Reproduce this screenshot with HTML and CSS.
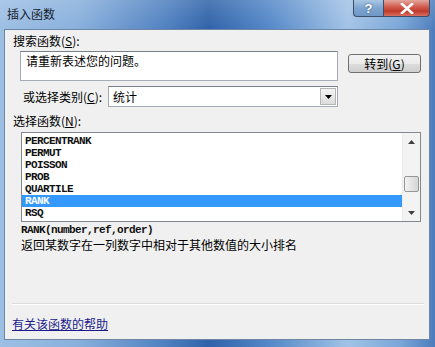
FILE: index.html
```html
<!DOCTYPE html>
<html lang="zh-CN">
<head>
<meta charset="utf-8">
<title>插入函数</title>
<link rel="stylesheet" href="styles.css">
</head>
<body>
<div class="window">
  <div class="titlebar">
    <span class="title">插入函数</span>
    <div class="tbtns">
      <div class="tb help">?</div>
      <div class="tb close">
        <svg width="14" height="11" viewBox="0 0 14 11"><path d="M2 1 L12 10 M12 1 L2 10" stroke="#fff" stroke-width="2.6" stroke-linecap="square"/></svg>
      </div>
    </div>
  </div>
  <div class="client">
    <div class="lbl">搜索函数(<u>S</u>):</div>
    <div class="row1">
      <div class="textbox">请重新表述您的问题。</div>
      <div class="btn">转到(<u>G</u>)</div>
    </div>
    <div class="row2">
      <div class="lbl2">或选择类别(<u>C</u>):</div>
      <div class="combo">
        <span class="combo-text">统计</span>
        <div class="dd"><svg width="7" height="4" viewBox="0 0 7 4"><path d="M0 0 H7 L3.5 4 Z" fill="#000"/></svg></div>
      </div>
    </div>
    <div class="lbl lbl3">选择函数(<u>N</u>):</div>
    <div class="listbox">
      <div class="items">
        <div class="item">PERCENTRANK</div>
        <div class="item">PERMUT</div>
        <div class="item">POISSON</div>
        <div class="item">PROB</div>
        <div class="item">QUARTILE</div>
        <div class="item sel">RANK</div>
        <div class="item">RSQ</div>
      </div>
      <div class="vscroll">
        <div class="arrow"><svg width="7" height="4" viewBox="0 0 7 4"><path d="M0 4 H7 L3.5 0 Z" fill="#404040"/></svg></div>
        <div class="track"><div class="thumb"></div></div>
        <div class="arrow"><svg width="7" height="4" viewBox="0 0 7 4"><path d="M0 0 H7 L3.5 4 Z" fill="#404040"/></svg></div>
      </div>
    </div>
    <div class="sig">RANK(number,ref,order)</div>
    <div class="desc">返回某数字在一列数字中相对于其他数值的大小排名</div>
    <div class="sep"></div>
    <a class="link" href="#">有关该函数的帮助</a>
  </div>
</div>
</body>
</html>
```
FILE: styles.css
```css
html, body {
  margin: 0;
  padding: 0;
}
body {
  width: 435px;
  height: 347px;
  overflow: hidden;
  font-family: "Noto Sans CJK SC", "Liberation Sans", sans-serif;
  font-size: 12px;
  color: #000;
}
.window {
  width: 435px;
  height: 347px;
  box-sizing: border-box;
  padding: 0 5px 7px 4px;
  display: flex;
  flex-direction: column;
  background:
    linear-gradient(180deg, rgba(255,255,255,0.15) 0%, rgba(255,255,255,0) 30px),
    linear-gradient(90deg, #9dbfe4 0%, #88b0dc 18%, #4f80c0 38%, #2f62a8 48%, #5488c8 62%, #a2c3e6 80%, #7aa6d8 92%, #4c7cbc 100%);
}
.titlebar {
  height: 29px;
  display: flex;
  align-items: flex-start;
  justify-content: space-between;
  flex: none;
}
.title {
  margin-top: 6px;
  margin-left: 3px;
  line-height: 16px;
  font-size: 12px;
  color: #18222e;
}
.tbtns {
  display: flex;
}
.tb {
  height: 17px;
  box-sizing: border-box;
  border: 1px solid #3b4f6a;
  border-top: none;
  display: flex;
  align-items: center;
  justify-content: center;
}
.help {
  width: 30px;
  border-radius: 0 0 0 4px;
  border-right: none;
  background: linear-gradient(180deg, #aac6e4 0%, #7ea5cf 50%, #6f98c6 100%);
  color: #fff;
  font-family: "Liberation Sans", sans-serif;
  font-weight: bold;
  font-size: 13px;
  line-height: 15px;
  text-shadow: 0 0 2px #2b4a70;
}
.close {
  width: 47px;
  border-radius: 0 0 4px 0;
  background: linear-gradient(180deg, #e3a79d 0%, #d0584a 45%, #c03a2c 70%, #d87060 100%);
}
.client {
  flex: 1;
  background: #f0f0f0;
  border: 1px solid #6d86a6;
  padding: 4px 0 0 7px;
  display: flex;
  flex-direction: column;
  align-items: flex-start;
}
u {
  text-decoration: underline;
  text-underline-offset: 1px;
}
.lbl {
  line-height: 14px;
  height: 14px;
  margin-left: 1px;
}
.row1 {
  display: flex;
  align-items: flex-start;
  margin-top: 3px;
  margin-left: 8px;
}
.textbox {
  width: 318px;
  height: 30px;
  box-sizing: border-box;
  background: #fff;
  border: 1px solid #a5acb5;
  border-top-color: #7a8088;
  padding: 1px 0 0 5px;
  line-height: 16px;
}
.btn {
  width: 73px;
  height: 19px;
  box-sizing: border-box;
  margin-top: 3px;
  margin-left: 10px;
  border: 1px solid #707070;
  border-radius: 3px;
  background: linear-gradient(180deg, #f2f2f2 0%, #ebebeb 50%, #dddddd 51%, #cfcfcf 100%);
  text-align: center;
  line-height: 17px;
}
.row2 {
  display: flex;
  align-items: center;
  margin-top: 5px;
}
.lbl2 {
  width: 96px;
  box-sizing: border-box;
  padding-left: 11px;
  line-height: 14px;
}
.combo {
  width: 230px;
  height: 21px;
  box-sizing: border-box;
  background: #fff;
  border: 1px solid #a5acb5;
  border-top-color: #7a8088;
  display: flex;
  align-items: center;
  justify-content: space-between;
  padding: 0 1px 0 4px;
}
.combo-text {
  line-height: 16px;
}
.dd {
  width: 16px;
  height: 17px;
  box-sizing: border-box;
  border: 1px solid #b5b5b5;
  background: linear-gradient(180deg, #f4f4f4 0%, #dcdcdc 100%);
  display: flex;
  align-items: center;
  justify-content: center;
}
.lbl3 {
  margin-top: 7px;
}
.listbox {
  margin-top: 4px;
  margin-left: 9px;
  width: 400px;
  height: 90px;
  box-sizing: border-box;
  border: 1px solid #828790;
  background: #fff;
  display: flex;
}
.items {
  flex: 1;
  padding-top: 2px;
}
.item {
  height: 12px;
  line-height: 12px;
  padding-left: 3px;
  font-family: "Liberation Mono", monospace;
  font-size: 11px;
  letter-spacing: -0.6px;
  font-weight: bold;
  color: #111;
  overflow: hidden;
}
.item.sel {
  background: #3399ff;
  color: #fff;
}
.vscroll {
  width: 17px;
  display: flex;
  flex-direction: column;
  background: #f3f3f3;
  border-left: 1px solid #ececec;
}
.arrow {
  height: 17px;
  display: flex;
  align-items: center;
  justify-content: center;
}
.track {
  flex: 1;
  display: flex;
  flex-direction: column;
  justify-content: flex-end;
  padding-bottom: 12px;
}
.thumb {
  height: 16px;
  margin: 0 1px;
  box-sizing: border-box;
  border: 1px solid #979797;
  border-radius: 2px;
  background: linear-gradient(90deg, #f2f2f2 0%, #e4e4e4 50%, #d4d4d4 100%);
}
.sig {
  margin-top: 2px;
  margin-left: 9px;
  line-height: 12px;
  font-family: "Liberation Mono", monospace;
  font-size: 11px;
  letter-spacing: -0.6px;
  font-weight: bold;
  color: #111;
}
.desc {
  margin-top: 2px;
  margin-left: 9px;
  line-height: 14px;
}
.sep {
  margin-top: 51px;
  width: 412px;
  height: 1px;
  background: #dcdcdc;
  border-bottom: 1px solid #ffffff;
}
.link {
  margin-top: 12px;
  line-height: 14px;
  color: #1a1a8c;
  text-decoration: underline;
}
```
